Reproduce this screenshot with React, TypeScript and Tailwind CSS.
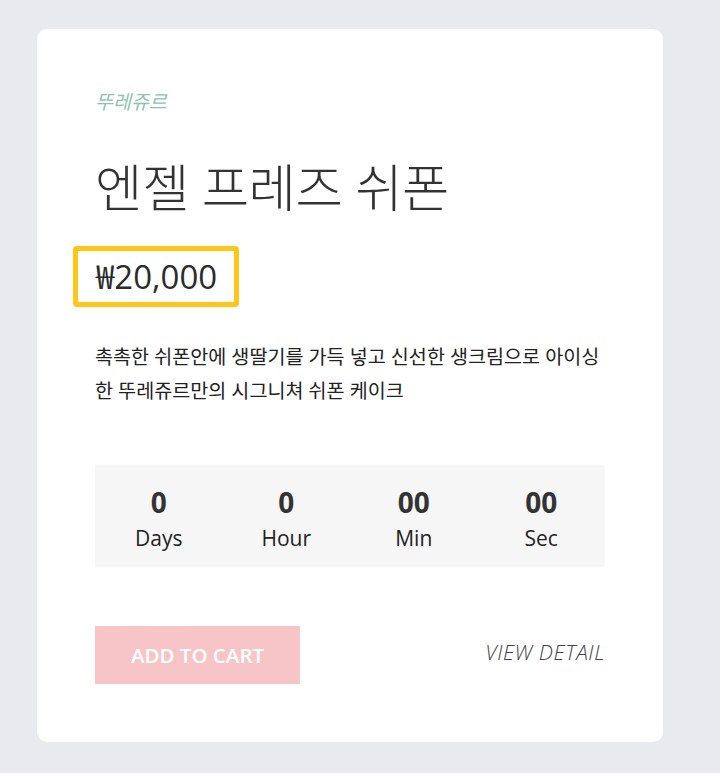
export default function App() {
  const units = [
    { value: '0', label: 'Days' },
    { value: '0', label: 'Hour' },
    { value: '00', label: 'Min' },
    { value: '00', label: 'Sec' },
  ]

  return (
    <div
      className="min-h-[773px] bg-[#e9eaee] pt-[29px] pl-[37px]"
      style={{ fontFamily: '"Open Sans", "Noto Sans CJK KR", sans-serif' }}
    >
      <div className="w-[626px] h-[713px] bg-white rounded-[10px] px-[58px] pt-[60px]">
        {/* 브랜드 */}
        <p className="text-[19.5px] italic text-[#8cc3b1] leading-[26px]">뚜레쥬르</p>

        {/* 상품명 */}
        <h1 className="mt-[40px] text-[51.5px] font-light text-[#333] leading-[64px] tracking-[-0.5px]">
          엔젤 프레즈 쉬폰
        </h1>

        {/* 가격 */}
        <div className="mt-[27px] -ml-[22px] w-[166px] h-[61px] border-[5px] border-[#ffc61a] rounded-[4px] pl-[18px] flex items-center">
          <span className="text-[33px] text-[#2b2b2b] leading-none">₩20,000</span>
        </div>

        {/* 설명 */}
        <p className="mt-[33px] text-[19.6px] text-[#222] leading-[34px]">
          촉촉한 쉬폰안에 생딸기를 가득 넣고 신선한 생크림으로 아이싱한 뚜레쥬르만의 시그니쳐 쉬폰 케이크
        </p>

        {/* 카운트다운 */}
        <div className="mt-[57px] h-[102px] bg-[#f6f6f6] grid grid-cols-4 items-center">
          {units.map((u) => (
            <div key={u.label} className="flex flex-col items-center pt-[8px]">
              <span className="text-[28px] font-bold text-[#333] leading-[36px]">{u.value}</span>
              <span className="text-[21px] text-[#222] leading-[36px]">{u.label}</span>
            </div>
          ))}
        </div>

        {/* 버튼 */}
        <div className="mt-[59px] flex items-center justify-between">
          <button className="w-[205px] h-[58px] bg-[#f7c5c8] text-white text-[20.5px] font-semibold uppercase">
            Add to cart
          </button>
          <a className="text-[21px] italic font-light text-[#444] tracking-[0.6px] uppercase -mt-[5px]">View detail</a>
        </div>
      </div>
    </div>
  )
}
